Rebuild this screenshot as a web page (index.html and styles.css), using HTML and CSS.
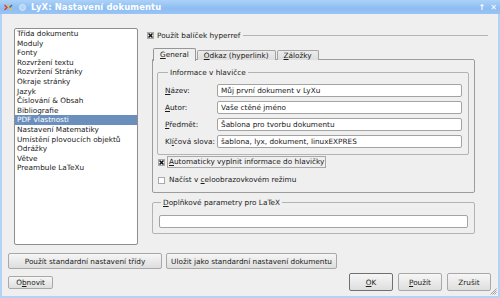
FILE: index.html
```html
<!DOCTYPE html>
<html>
<head>
    <title>LyX: Nastavení dokumentu</title>
    <link rel="stylesheet" href="styles.css">
</head>
<body>
    <div class="window">
        <div class="titlebar">
            <span class="app-icon">
                <svg width="9" height="7" viewBox="0 0 9 7">
                    <path d="M0.5 1 L3 3.5 L0.5 6" stroke="#e03a2a" stroke-width="1.4" fill="none"/>
                    <path d="M3.5 1 L8 6" stroke="#f3c21b" stroke-width="1.4"/>
                    <path d="M8 1 L5.5 3.5" stroke="#3a66c8" stroke-width="1.4"/>
                </svg>
            </span>
            <span class="pin-icon"></span>
            <span class="title">LyX: Nastavení dokumentu</span>
            <span class="tb-buttons">
                <span class="tb-btn">&#8593;</span>
                <span class="tb-btn">&#10005;</span>
            </span>
        </div>

        <div class="content">
            <div class="main">
                <ul class="sections">
                    <li>Třída dokumentu</li>
                    <li>Moduly</li>
                    <li>Fonty</li>
                    <li>Rozvržení textu</li>
                    <li>Rozvržení Stránky</li>
                    <li>Okraje stránky</li>
                    <li>Jazyk</li>
                    <li>Číslování &amp; Obsah</li>
                    <li>Bibliografie</li>
                    <li class="selected">PDF vlastnosti</li>
                    <li>Nastavení Matematiky</li>
                    <li>Umístění plovoucích objektů</li>
                    <li>Odrážky</li>
                    <li>Větve</li>
                    <li>Preambule LaTeXu</li>
                </ul>

                <div class="pane">
                    <div class="head">
                        <span class="box checked"><svg width="5" height="5" viewBox="0 0 5 5"><path d="M0.5 0.5 L4.5 4.5 M4.5 0.5 L0.5 4.5" stroke="#111" stroke-width="1.5"/></svg></span>
                        <span class="head-label">Použít balíček hyperref</span>
                        <span class="rule"></span>
                    </div>

                    <div class="tabs">
                        <div class="tabbar">
                            <span class="tab active"><u>G</u>eneral</span>
                            <span class="tab"><u>O</u>dkaz (hyperlink)</span>
                            <span class="tab"><u>Z</u>áložky</span>
                        </div>
                        <div class="tabpage">
                            <fieldset class="group info">
                                <legend>Informace v hlavičce</legend>
                                <div class="form">
                                    <label><u>N</u>ázev:</label>
                                    <input type="text" value="Můj první dokument v LyXu">
                                    <label><u>A</u>utor:</label>
                                    <input type="text" value="Vaše ctěné jméno">
                                    <label><u>P</u>ředmět:</label>
                                    <input type="text" value="Šablona pro tvorbu dokumentu">
                                    <label>Kl<u>í</u>čová slova:</label>
                                    <input type="text" value="šablona, lyx, dokument, linuxEXPRES">
                                </div>
                            </fieldset>

                            <div class="check first">
                                <span class="box checked"><svg width="5" height="5" viewBox="0 0 5 5"><path d="M0.5 0.5 L4.5 4.5 M4.5 0.5 L0.5 4.5" stroke="#111" stroke-width="1.5"/></svg></span>
                                <span class="check-label focused"><u>A</u>utomaticky vyplnit informace do hlavičky</span>
                            </div>
                            <div class="check">
                                <span class="box"></span>
                                <span class="check-label">Načíst v <u>c</u>eloobrazovkovém režimu</span>
                            </div>
                        </div>
                    </div>

                    <fieldset class="group extra">
                        <legend><u>D</u>oplňkové parametry pro LaTeX</legend>
                        <input type="text" value="">
                    </fieldset>
                </div>
            </div>

            <div class="btnrow">
                <button class="wide-a">Použít standardní nastavení třídy</button>
                <button class="wide-b">Uložit jako standardní nastavení dokumentu</button>
            </div>
            <div class="btnrow last">
                <button class="restore">O<u>b</u>novit</button>
                <span class="spacer"></span>
                <button class="action default"><u>O</u>K</button>
                <button class="action"><u>P</u>oužít</button>
                <button class="action">Zrušit</button>
            </div>
        </div>

        <span class="grip">
            <svg width="7" height="7" viewBox="0 0 7 7">
                <path d="M6.5 0.5 L0.5 6.5 M6.5 2.5 L2.5 6.5 M6.5 4.5 L4.5 6.5" stroke="#8a8a8a" stroke-width="0.8"/>
            </svg>
        </span>
    </div>
</body>
</html>
```

FILE: styles.css
```css
body {
    margin: 0;
    font-family: "DejaVu Sans", sans-serif;
    font-size: 7.3px;
    color: #1a1a1a;
}
.window {
    position: relative;
    width: 500px;
    height: 298px;
    box-sizing: border-box;
    border: 2px solid #b2d3f6;
    border-top: none;
    background: #efefef;
}

/* title bar */
.titlebar {
    height: 14px;
    margin: 0 -2px;
    display: flex;
    align-items: center;
    background: linear-gradient(#acd2f8, #8dbdf2 60%, #98c5f4);
    color: #fff;
}
.app-icon {
    display: flex;
    margin-left: 4px;
}
.pin-icon {
    width: 5px;
    height: 5px;
    margin-left: 6px;
    border: 1px solid #d6e8fb;
    border-radius: 50%;
    background: #b4d5f7;
}
.title {
    margin-left: 5px;
    font-weight: bold;
    font-size: 8.4px;
    letter-spacing: 0.15px;
}
.tb-buttons {
    margin-left: auto;
    margin-right: 3px;
    display: flex;
    gap: 5px;
}
.tb-btn {
    font-size: 8px;
    font-weight: bold;
}

/* content */
.content {
    padding: 14px 7px 0 6px;
}
.main {
    display: flex;
    height: 217px;
    margin-left: 6px;
}
.sections {
    width: 124px;
    height: 217px;
    box-sizing: border-box;
    margin: 0;
    padding: 0;
    list-style: none;
    background: #fff;
    border: 1px solid #8e8e8e;
    border-radius: 2px;
}
.sections li {
    height: 9.6px;
    line-height: 9.6px;
    padding-left: 2px;
    white-space: nowrap;
}
.sections li.selected {
    background: #6a8fbd;
    color: #fff;
}

.pane {
    width: 341px;
    margin-left: 9px;
}
.head {
    display: flex;
    align-items: center;
    height: 14px;
}
.box {
    display: inline-flex;
    align-items: center;
    justify-content: center;
    width: 7px;
    height: 7px;
    box-sizing: border-box;
    border: 1px solid #a9a9a9;
    background: #fff;
}
.box.checked {
    background: #f4f4f4;
}
.head-label {
    margin-left: 3px;
}
.rule {
    flex: 1;
    height: 0;
    margin-left: 3px;
    margin-top: 1px;
    border-top: 1px solid #b4b4b4;
}

/* tabs */
.tabs {
    width: 323px;
    margin: 6px 0 0 5px;
}
.tabbar {
    display: flex;
    align-items: flex-end;
    height: 12px;
    padding-left: 1px;
    gap: 1px;
    position: relative;
    z-index: 1;
}
.tab {
    height: 9px;
    line-height: 9px;
    padding: 0 6px;
    border: 1px solid #a3a3a3;
    border-bottom: none;
    border-radius: 2px 2px 0 0;
    background: linear-gradient(#ececec, #dedede);
    white-space: nowrap;
}
.tab.active {
    height: 12px;
    line-height: 12px;
    margin-bottom: -1px;
    background: #efefef;
    border-color: #969696;
}
.tabpage {
    height: 134px;
    box-sizing: border-box;
    margin-top: -1px;
    border: 1px solid #9c9c9c;
    border-radius: 0 2px 2px 2px;
}

/* group boxes */
.group {
    margin: 0;
    padding: 0;
    border: 1px solid #b3b3b3;
    border-radius: 2px;
}
.group legend {
    line-height: 9px;
    padding: 0 2px;
}
.info {
    margin: 8px 5px 0 4px;
    padding: 7px 6px 6px 7px;
}
.info legend {
    margin-left: 3px;
}
.form {
    display: grid;
    grid-template-columns: 52px 1fr;
    grid-auto-rows: 13px;
    row-gap: 4px;
    align-items: center;
}
input[type="text"] {
    height: 13px;
    box-sizing: border-box;
    margin: 0;
    padding: 0 3px;
    border: 1px solid #a3a3a3;
    border-radius: 2px;
    background: #fff;
    font-family: "DejaVu Sans", sans-serif;
    font-size: 7.3px;
    color: #1a1a1a;
}
.extra {
    margin-top: 5px;
    margin-right: 13px;
    margin-left: 5px;
    padding: 8px 6px 5px 6px;
}
.extra legend {
    margin-left: 2px;
}
.extra input {
    width: 100%;
}

.check {
    display: flex;
    align-items: center;
    height: 12px;
    margin-top: 6px;
    padding-left: 5px;
}
.check.first {
    margin-top: 1px;
}
.check-label {
    margin-left: 2px;
    padding: 0 1px;
    line-height: 10px;
    border: 1px solid transparent;
}
.check-label.focused {
    border-color: #a8a8a8;
}

/* buttons */
.btnrow {
    display: flex;
    gap: 4px;
    margin-top: 8px;
}
.btnrow.last {
    gap: 5px;
    margin-top: 4px;
    align-items: center;
}
button {
    height: 16px;
    margin: 0;
    padding: 0 4px;
    border: 1px solid #a8a8a8;
    border-radius: 2px;
    background: linear-gradient(#f6f6f6, #dedede);
    font-family: "DejaVu Sans", sans-serif;
    font-size: 7.3px;
    color: #1a1a1a;
}
.wide-a {
    width: 154px;
}
.wide-b {
    width: 171px;
}
.restore {
    width: 45px;
    height: 13px;
}
.spacer {
    flex: 1;
}
.action {
    width: 44px;
    height: 18px;
}
.action.default {
    border-color: #707070;
}
.grip {
    position: absolute;
    right: 1px;
    bottom: 1px;
    display: flex;
}
```
